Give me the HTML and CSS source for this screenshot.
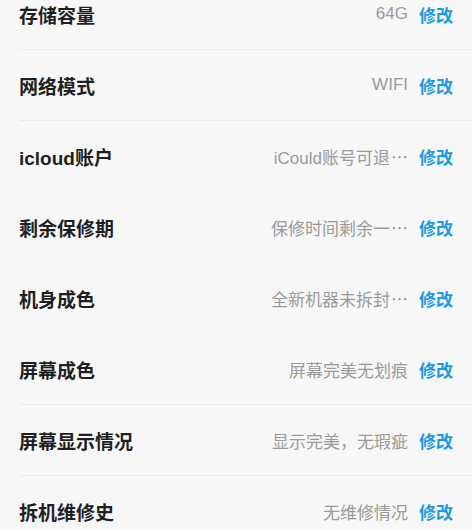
FILE: index.html
```html
<!DOCTYPE html>
<html>
<head>
  <meta charset="UTF-8">
  <title>机器信息</title>
  <link rel="stylesheet" href="styles.css">
</head>
<body>
  <div class="info-list">
    <div class="info-row line">
      <span class="label">存储容量</span>
      <span class="value">64G</span>
      <a class="edit">修改</a>
    </div>
    <div class="info-row line">
      <span class="label">网络模式</span>
      <span class="value">WIFI</span>
      <a class="edit">修改</a>
    </div>
    <div class="info-row">
      <span class="label">icloud账户</span>
      <span class="value">iCould账号可退<span class="more">⋯</span></span>
      <a class="edit">修改</a>
    </div>
    <div class="info-row">
      <span class="label">剩余保修期</span>
      <span class="value">保修时间剩余一<span class="more">⋯</span></span>
      <a class="edit">修改</a>
    </div>
    <div class="info-row">
      <span class="label">机身成色</span>
      <span class="value">全新机器未拆封<span class="more">⋯</span></span>
      <a class="edit">修改</a>
    </div>
    <div class="info-row line">
      <span class="label">屏幕成色</span>
      <span class="value">屏幕完美无划痕</span>
      <a class="edit">修改</a>
    </div>
    <div class="info-row line">
      <span class="label">屏幕显示情况</span>
      <span class="value">显示完美，无瑕疵</span>
      <a class="edit">修改</a>
    </div>
    <div class="info-row">
      <span class="label">拆机维修史</span>
      <span class="value">无维修情况</span>
      <a class="edit">修改</a>
    </div>
  </div>
</body>
</html>
```
FILE: styles.css
```css
body {
  margin: 0;
  background-color: #f7f7f7;
  font-family: "Liberation Sans", "Noto Sans CJK SC", sans-serif;
  overflow: hidden;
}
.info-list {
  display: flex;
  flex-direction: column;
  margin-top: -21px;
  padding-left: 19px;
}
.info-row {
  display: flex;
  align-items: center;
  height: 71px;
  box-sizing: border-box;
  padding-right: 19px;
}
.info-row.line {
  border-bottom: 1px solid #ebebeb;
}
.label {
  flex: 1;
  font-size: 19px;
  font-weight: bold;
  color: #1f1f1f;
}
.value {
  white-space: nowrap;
  font-size: 17px;
  color: #9a9a9a;
}
.value .more {
  margin-left: 1px;
}
.edit {
  margin-left: 11px;
  font-size: 17px;
  font-weight: bold;
  color: #1a9ae2;
  cursor: pointer;
}
```
